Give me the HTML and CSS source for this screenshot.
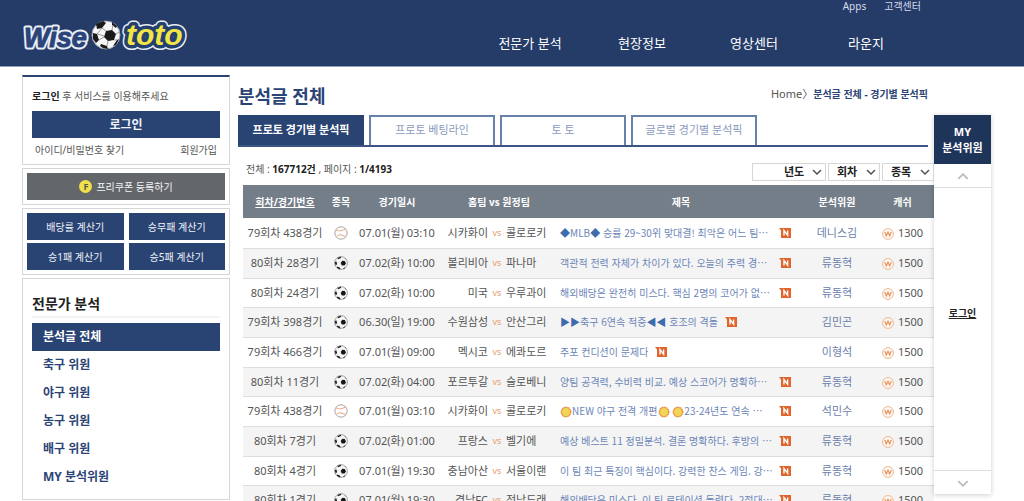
FILE: index.html
```
<!DOCTYPE html>
<html lang="ko">
<head>
<meta charset="utf-8">
<title>Wisetoto - 분석글 전체</title>
<link rel="stylesheet" href="styles.css">
</head>
<body>
<svg class="defs" aria-hidden="true">
  <symbol id="soccer" viewBox="0 0 14 14">
    <circle cx="7" cy="7" r="6.4" fill="#f6f6f6" stroke="#8d8d8d" stroke-width=".8"/>
    <path d="M8.2 4.800l2.600.2 1.200 2.400-1.500 2.200-2.700-.2-1.100-2.300z" fill="#161616"/>
    <path d="M3.200 2l3.500-1.300.6 1L4.500 3.200zM.7 6.200l1.600-1 .9 2.700-1.500 1.600zM3.300 10.400l2.500 1 .8 2-2-.4-1.800-1.600zM9.500 12.200l2-1.200-.8 1.600-1.600.6zM10.400 1.500l2 2-.8-.3z" fill="#222"/>
  </symbol>
  <symbol id="baseball" viewBox="0 0 14 14">
    <circle cx="7" cy="7" r="6.2" fill="#fdfdfd" stroke="#aaa5a2" stroke-width="1"/>
    <path d="M2 4.200c2.500.2 3 .8 4.800.6s3-1 4.700-2M2.500 10.200c1.500-1 3-1.600 4.500-1.300s2.500 1.200 4.500 1.200" fill="none" stroke="#e9a57c" stroke-width="1"/>
  </symbol>
  <symbol id="new" viewBox="0 0 12 10">
    <path d="M0 0h12v10H2V2.500z" fill="#e0652c"/>
    <path d="M5 7.500v-5l3.600 4.600V2.400" fill="none" stroke="#fff" stroke-width="1.400"/>
  </symbol>
  <symbol id="won" viewBox="0 0 12 12">
    <circle cx="6" cy="6" r="5.400" fill="#fffaf5" stroke="#efb58c" stroke-width="1"/>
    <path d="M2.800 4l1.500 4L6 4.300 7.700 8l1.500-4" fill="none" stroke="#e5935c" stroke-width="1.200"/>
  </symbol>
  <symbol id="sun" viewBox="0 0 12 12">
    <circle cx="6" cy="6" r="4.700" fill="#f0d653" stroke="#e58a45" stroke-width="1.400" stroke-dasharray="1.600 .5"/>
  </symbol>
  <symbol id="down" viewBox="0 0 10 6"><path d="M1 1l4 4 4-4" fill="none" stroke="currentColor" stroke-width="1.500"/></symbol>
</svg>
<div class="page">
  <header class="top">
    <a class="logo" href="#" aria-label="Wise toto">
      <svg width="168" height="34" viewBox="0 0 168 34">
        <g font-family="Liberation Sans, sans-serif" font-weight="700" font-style="italic" stroke-linejoin="round">
          <text x="2" y="28" font-size="27" fill="#e9eef7" stroke="#e9eef7" stroke-width="5">Wise</text>
          <text x="2" y="28" font-size="27" fill="#2b4578" stroke="#2b4578" stroke-width="1">Wise</text>
          <text x="104" y="26" font-size="30" fill="#e9eef7" stroke="#e9eef7" stroke-width="10">toto</text>
          <text x="104" y="26" font-size="30" fill="#f3e545" stroke="#24406f" stroke-width="7" paint-order="stroke">toto</text>
        </g>
        <circle cx="84" cy="16" r="14" fill="#f7f7f7" stroke="#9aa3b2" stroke-width="1"/>
        <path d="M84 12l6-1 4 4-2 6-6 1-4-4zM74 5l7-3 3 2-4 5-5 1zM71 14l4 1 2 6-3 3-3-4zM79 25l6 2 1 3-5-1-3-2zM90 3l5 4-1 2-4-3zM95 21l2-1-3 6-3 1z" fill="#1a1a1a"/>
        <path d="M80 9l4 3M75 15l7 2M77 21l5-3M86 22l-1 5M92 21l3 0M94 15l3-2M90 11l1-5M80 9l-5 6" fill="none" stroke="#999" stroke-width="1"/>
      </svg>
    </a>
    <div class="menus">
      <nav class="util"><a href="#">Apps</a><a href="#">고객센터</a></nav>
      <nav class="gnb"><a href="#">전문가 분석</a><a href="#">현장정보</a><a href="#">영상센터</a><a href="#">라운지</a></nav>
    </div>
  </header>
  <div class="body">
    <aside class="side">
      <section class="box login">
        <p><b>로그인</b> 후 서비스를 이용해주세요</p>
        <button class="btn login-btn" type="button">로그인</button>
        <div class="login-links"><a href="#">아이디/비밀번호 찾기</a><a href="#">회원가입</a></div>
      </section>
      <section class="box tools">
        <button class="btn coupon" type="button"><span class="coin">F</span>프리쿠폰 등록하기</button>
      </section>
      <section class="box tools calc">
        <button class="btn" type="button">배당률 계산기</button>
        <button class="btn" type="button">승무패 계산기</button>
        <button class="btn" type="button">승1패 계산기</button>
        <button class="btn" type="button">승5패 계산기</button>
      </section>
      <nav class="box expert">
        <h2>전문가 분석</h2>
        <a class="on" href="#">분석글 전체</a>
        <a href="#">축구 위원</a>
        <a href="#">야구 위원</a>
        <a href="#">농구 위원</a>
        <a href="#">배구 위원</a>
        <a href="#">MY 분석위원</a>
      </nav>
    </aside>
    <main class="main">
      <div class="heading">
        <h1>분석글 전체</h1>
        <p class="crumb">Home〉<b>분석글 전체 - 경기별 분석픽</b></p>
      </div>
      <nav class="tabs">
        <a class="on" href="#">프로토 경기별 분석픽</a>
        <a href="#">프로토 베팅라인</a>
        <a href="#">토 토</a>
        <a href="#">글로벌 경기별 분석픽</a>
      </nav>
      <div class="bar">
        <p>전체 : <b>167712건</b> , 페이지 : <b>1/4193</b></p>
        <div class="filters">
          <span class="pick year"><select aria-label="년도"><option>년도</option></select><svg width="10" height="6"><use href="#down"/></svg></span>
          <span class="pick"><select aria-label="회차"><option>회차</option></select><svg width="10" height="6"><use href="#down"/></svg></span>
          <span class="pick"><select aria-label="종목"><option>종목</option></select><svg width="10" height="6"><use href="#down"/></svg></span>
        </div>
      </div>
      <table class="list">
        <colgroup><col class="c-no"><col class="c-type"><col class="c-date"><col class="c-home"><col class="c-vs"><col class="c-away"><col><col class="c-who"><col class="c-cash"></colgroup>
        <thead><tr><th><u>회차/경기번호</u></th><th>종목</th><th>경기일시</th><th colspan="3">홈팀 vs 원정팀</th><th>제목</th><th>분석위원</th><th>캐쉬</th></tr></thead>
        <tbody>
        <tr><td>79회차 438경기</td><td><svg class="ball"><use href="#baseball"/></svg></td><td>07.01(월) 03:10</td><td class="home">시카화이</td><td class="vs">vs</td><td class="away">콜로로키</td><td><div class="subject long"><a href="#"><i>◆</i>MLB<i>◆</i> 승률 29~30위 맞대결! 최악은 어느 팀…</a><svg class="new"><use href="#new"/></svg></div></td><td class="who">데니스김</td><td class="cash"><svg><use href="#won"/></svg>1300</td></tr>
        <tr><td>80회차 28경기</td><td><svg class="ball"><use href="#soccer"/></svg></td><td>07.02(화) 10:00</td><td class="home">볼리비아</td><td class="vs">vs</td><td class="away">파나마</td><td><div class="subject long"><a href="#">객관적 전력 자체가 차이가 있다. 오늘의 주력 경…</a><svg class="new"><use href="#new"/></svg></div></td><td class="who">류동혁</td><td class="cash"><svg><use href="#won"/></svg>1500</td></tr>
        <tr><td>80회차 24경기</td><td><svg class="ball"><use href="#soccer"/></svg></td><td>07.02(화) 10:00</td><td class="home">미국</td><td class="vs">vs</td><td class="away">우루과이</td><td><div class="subject long"><a href="#">해외배당은 완전히 미스다. 핵심 2명의 코어가 없…</a><svg class="new"><use href="#new"/></svg></div></td><td class="who">류동혁</td><td class="cash"><svg><use href="#won"/></svg>1500</td></tr>
        <tr><td>79회차 398경기</td><td><svg class="ball"><use href="#soccer"/></svg></td><td>06.30(일) 19:00</td><td class="home">수원삼성</td><td class="vs">vs</td><td class="away">안산그리</td><td><div class="subject"><a href="#"><i>▶▶</i>축구 6연속 적중<i>◀◀</i> 호조의 격돌</a><svg class="new"><use href="#new"/></svg></div></td><td class="who">김민곤</td><td class="cash"><svg><use href="#won"/></svg>1500</td></tr>
        <tr><td>79회차 466경기</td><td><svg class="ball"><use href="#soccer"/></svg></td><td>07.01(월) 09:00</td><td class="home">멕시코</td><td class="vs">vs</td><td class="away">에콰도르</td><td><div class="subject"><a href="#">주포 컨디션이 문제다</a><svg class="new"><use href="#new"/></svg></div></td><td class="who">이형석</td><td class="cash"><svg><use href="#won"/></svg>1500</td></tr>
        <tr><td>80회차 11경기</td><td><svg class="ball"><use href="#soccer"/></svg></td><td>07.02(화) 04:00</td><td class="home">포르투갈</td><td class="vs">vs</td><td class="away">슬로베니</td><td><div class="subject long"><a href="#">양팀 공격력, 수비력 비교. 예상 스코어가 명확하…</a><svg class="new"><use href="#new"/></svg></div></td><td class="who">류동혁</td><td class="cash"><svg><use href="#won"/></svg>1500</td></tr>
        <tr><td>79회차 438경기</td><td><svg class="ball"><use href="#baseball"/></svg></td><td>07.01(월) 03:10</td><td class="home">시카화이</td><td class="vs">vs</td><td class="away">콜로로키</td><td><div class="subject long"><a href="#"><svg class="sun"><use href="#sun"/></svg>NEW 야구 전격 개편<svg class="sun"><use href="#sun"/></svg> <svg class="sun"><use href="#sun"/></svg>23-24년도 연속 …</a><svg class="new"><use href="#new"/></svg></div></td><td class="who">석민수</td><td class="cash"><svg><use href="#won"/></svg>1500</td></tr>
        <tr><td>80회차 7경기</td><td><svg class="ball"><use href="#soccer"/></svg></td><td>07.02(화) 01:00</td><td class="home">프랑스</td><td class="vs">vs</td><td class="away">벨기에</td><td><div class="subject long"><a href="#">예상 베스트 11 정밀분석. 결론 명확하다. 후방의 …</a><svg class="new"><use href="#new"/></svg></div></td><td class="who">류동혁</td><td class="cash"><svg><use href="#won"/></svg>1500</td></tr>
        <tr><td>80회차 4경기</td><td><svg class="ball"><use href="#soccer"/></svg></td><td>07.01(월) 19:30</td><td class="home">충남아산</td><td class="vs">vs</td><td class="away">서울이랜</td><td><div class="subject long"><a href="#">이 팀 최근 특징이 핵심이다. 강력한 찬스 게임. 강…</a><svg class="new"><use href="#new"/></svg></div></td><td class="who">류동혁</td><td class="cash"><svg><use href="#won"/></svg>1500</td></tr>
        <tr><td>80회차 1경기</td><td><svg class="ball"><use href="#soccer"/></svg></td><td>07.01(월) 19:30</td><td class="home">경남FC</td><td class="vs">vs</td><td class="away">전남드래</td><td><div class="subject long"><a href="#">해외배당은 미스다. 이 팀 로테이션 돌렸다. 2점대…</a><svg class="new"><use href="#new"/></svg></div></td><td class="who">류동혁</td><td class="cash"><svg><use href="#won"/></svg>1500</td></tr>
        </tbody>
      </table>
    </main>
    <aside class="rail">
      <h2>MY<br>분석위원</h2>
      <button class="up" type="button" aria-label="위로"><svg width="12" height="7" viewBox="0 0 10 6"><use href="#down"/></svg></button>
      <div class="rail-body"><a href="#">로그인</a></div>
      <button type="button" aria-label="아래로"><svg width="12" height="7" viewBox="0 0 10 6"><use href="#down"/></svg></button>
    </aside>
  </div>
</div>
</body>
</html>
```
FILE: styles.css
```
* { box-sizing: border-box; }
body {
  margin: 0;
  background: #fff;
  color: #555;
  font: 11px/16px "Noto Sans", "Noto Sans CJK KR", sans-serif;
}
a { color: inherit; text-decoration: none; }
p, h1, h2 { margin: 0; }
button, select { font: inherit; color: inherit; border: 0; border-radius: 0; padding: 0; }
.defs { display: none; }
.page { height: 100vh; overflow: hidden; }

/* header */
.top {
  display: flex;
  justify-content: space-between;
  height: 67px;
  padding: 0 102px 0 22px;
  background: #253b68;
  border-bottom: 1px solid #8fa0c4;
  color: #fff;
}
.logo { padding-top: 19px; }
.logo svg { display: block; }
.menus { display: flex; flex-direction: column; align-items: flex-end; }
.util { display: flex; gap: 18px; height: 14px; padding-right: 1px; font-size: 10px; line-height: 13px; color: #d5dbe8; }
.gnb { display: flex; padding-top: 19px; font-size: 13px; line-height: 20px; }
.gnb a { width: 112px; text-align: center; }

.body { display: flex; align-items: flex-start; padding: 8px 33px 0 22px; }

/* sidebar */
.side { flex: none; width: 208px; display: flex; flex-direction: column; gap: 3px; font-size: 10px; }
.box { border: 1px solid #d6d6d6; background: #fff; }
.btn { background: #294373; color: #f0f3f8; height: 27px; text-align: center; cursor: pointer; }
.login { border-top: 2px solid #294373; padding: 11px 9px 6px; }
.login b { color: #222; }
.login-btn { display: block; width: 100%; margin: 7px 0 4px; font-size: 12px; font-weight: 700; }
.login-links { display: flex; justify-content: space-between; padding: 0 3px; }
.tools { padding: 4px; }
.coupon { display: flex; align-items: center; justify-content: center; gap: 4px; width: 100%; background: #646769; }
.coin { width: 13px; height: 13px; border-radius: 50%; background: #f0e14a; color: #555; font-size: 9px; line-height: 13px; font-weight: 700; }
.calc { display: grid; grid-template-columns: 1fr 1fr; gap: 3px 5px; }
.expert { padding: 13px 9px 8px; color: #2b4475; font-size: 12px; font-weight: 700; }
.expert h2 { font-size: 14px; line-height: 24px; color: #222; border-bottom: 2px solid #f2f3f5; margin-bottom: 5px; }
.expert a { display: block; padding-left: 11px; line-height: 28px; }
.expert .on { background: #294373; color: #fff; }

/* main column */
.main { flex: 1; min-width: 0; padding-left: 8px; }
.heading { display: flex; justify-content: space-between; height: 40px; padding: 8px 6px 0 0; }
h1 { font-size: 18px; line-height: 26px; color: #2b4475; }
.crumb { line-height: 22px; }
.crumb b { font-size: 10px; color: #2b4475; }
.tabs { display: flex; gap: 5px; margin-right: 6px; border-bottom: 2px solid #3c5585; }
.tabs a { width: 126px; height: 30px; line-height: 26px; text-align: center; color: #8b9bbd; border: 2px solid #6881ab; border-bottom: 0; }
.tabs .on { background: #294373; border-color: #294373; color: #fff; font-weight: 700; }
.bar { display: flex; justify-content: space-between; height: 38px; padding: 14px 0 0 8px; }
.bar p { font-size: 10px; }
.bar b { color: #222; }
.filters { display: flex; gap: 2px; padding-top: 2px; }
.pick { position: relative; width: 52px; height: 18px; }
.pick.year { width: 74px; }
.pick select { appearance: none; width: 100%; height: 18px; padding-left: 8px; border: 1px solid #d6d6d6; background: #fff; color: #222; font-weight: 700; line-height: 16px; }
.pick.year select { padding-left: 31px; }
.pick svg { position: absolute; right: 4px; top: 6px; pointer-events: none; }

/* list */
.list { width: calc(100% - 5px); margin-left: 5px; border-collapse: collapse; table-layout: fixed; }
.c-no { width: 84px; }
.c-type { width: 28px; }
.c-date { width: 84px; }
.c-home { width: 49px; }
.c-vs { width: 18px; }
.c-away { width: 53px; }
.c-who { width: 68px; }
.c-cash { width: 63px; }
.list th { height: 33px; padding: 0; background: #747e89; color: #fff; font-size: 10px; }
.list td { padding: 0; text-align: center; white-space: nowrap; border-bottom: 1px solid #ddd; }
.list tbody tr { height: 30px; }
.list tbody tr:nth-child(3n) { height: 29px; }
.list tbody tr:nth-child(even) { background: #f4f4f4; }
.list svg { display: inline-block; vertical-align: middle; }
.list .ball { display: block; width: 14px; height: 14px; margin: 0 auto; }
.list .home { text-align: right; }
.list .away { text-align: left; }
.list .vs { font-size: 9px; color: #e8a070; }
.subject { display: flex; align-items: center; gap: 7px; padding-left: 1px; font: 10px/16px "Noto Sans CJK KR", sans-serif; color: #6c86b8; }
.subject a { overflow: hidden; }
.subject.long a { width: 212px; text-align: left; }
.subject i { font-style: normal; color: #3e6bac; }
.new { flex: none; width: 12px; height: 10px; }
.sun { width: 12px; height: 12px; }
.list .who { color: #6b80ab; }
.cash svg { width: 12px; height: 12px; margin-right: 4px; }

/* right rail */
.rail { flex: none; width: 57px; height: 379px; margin-top: 40px; display: flex; flex-direction: column; background: #fff; box-shadow: 0 1px 5px rgba(0, 0, 0, .2); text-align: center; }
.rail h2 { padding: 9px 0 8px; background: #1f3459; color: #fff; font-size: 11px; line-height: 16px; }
.rail button { height: 24px; background: #fff; color: #bbb; border-top: 1px solid #ddd; }
.rail .up { border-top: 0; border-bottom: 1px solid #ddd; }
.rail .up svg { transform: rotate(180deg); }
.rail-body { flex: 1; padding-top: 117px; font-size: 10px; font-weight: 700; color: #222; }
.rail-body a { text-decoration: underline; }
```
